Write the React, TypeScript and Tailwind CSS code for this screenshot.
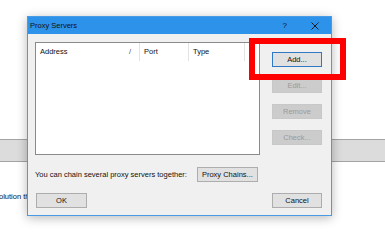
import { ReactNode } from "react";

const font = { fontFamily: '"Liberation Sans", Arial, sans-serif' };

const Btn = ({ children, disabled, focused, className = "" }: { children: ReactNode; disabled?: boolean; focused?: boolean; className?: string }) => {
    let look = "bg-[#e1e1e1] border-[#adadad] text-[#111]";
    if (disabled) look = "bg-[#cccccc] border-[#c8c8c8] text-[#9a9a9a]";
    if (focused) look = "bg-[#e1e1e1] border-[#2f78c4] text-[#111]";
    return (
        <div className={`h-[15px] border flex items-center justify-center text-[7.5px] leading-none ${look} ${className}`}>
            {children}
        </div>
    );
};

const App = () => {
    return (
        <div className="relative w-[385px] h-[245px] bg-white overflow-hidden text-[#111]" style={font}>

            {/* page behind the dialog */}
            <div className="pt-[139px]">
                <div className="h-[23px] border-y border-[#a3a3a3] bg-[#dcdcdc]"></div>
                <div className="mt-[31px] w-[27px] overflow-hidden">
                    <div className="-ml-[1px] text-[7.5px] leading-none whitespace-nowrap">olution th</div>
                </div>
            </div>

            {/* dialog window */}
            <div className="absolute left-[27px] top-[16px] w-[305px] h-[200px] border border-[#4a9be6] bg-[#f0f0f0] shadow-[0_2px_10px_rgba(0,0,0,0.28)] flex flex-col">
                <div className="h-[17px] bg-[#2d92ea] flex items-center pl-[2px] text-[7.5px] leading-none text-[#111]">
                    <span>Proxy Servers</span>
                    <span className="ml-auto mr-[24px] text-[8px]">?</span>
                    <svg width="8" height="8" viewBox="0 0 8 8" className="mr-[12px]">
                        <path d="M0.5 0.5 L7.5 7.5 M7.5 0.5 L0.5 7.5" stroke="#111" strokeWidth="0.9" fill="none" />
                    </svg>
                </div>

                <div className="flex pt-[8px] pl-[7px]">
                    <div className="w-[225px] h-[113px] border border-[#8a8a8a] bg-white">
                        <div className="h-[18px] flex text-[7.5px] leading-none">
                            <div className="w-[104px] flex items-center pl-[4px] pr-[8px] border-r border-[#e3e3e3]">
                                <span>Address</span>
                                <span className="ml-auto text-[#555]">/</span>
                            </div>
                            <div className="w-[49px] flex items-center pl-[4px] border-r border-[#e3e3e3]">Port</div>
                            <div className="w-[56px] flex items-center pl-[4px] border-r border-[#e3e3e3]">Type</div>
                        </div>
                    </div>

                    <div className="ml-[12px] w-[50px] pt-[10px] flex flex-col gap-[11px]">
                        <Btn focused>Add...</Btn>
                        <Btn disabled>Edit...</Btn>
                        <Btn disabled>Remove</Btn>
                        <Btn disabled>Check...</Btn>
                    </div>
                </div>

                <div className="flex items-center pl-[7px] mt-[12px] text-[7.5px] leading-none">
                    <span>You can chain several proxy servers together:</span>
                    <Btn className="ml-[10px] w-[61px]">Proxy Chains...</Btn>
                </div>

                <div className="flex justify-between pl-[8px] pr-[9px] mt-[11px]">
                    <Btn className="w-[51px]">OK</Btn>
                    <Btn className="w-[50px]">Cancel</Btn>
                </div>
            </div>

            {/* red highlight around the Add button */}
            <div className="absolute left-[249px] top-[38px] w-[97px] h-[42px] border-[6px] border-[#ff0000]"></div>
        </div>
    );
};

export default App;
